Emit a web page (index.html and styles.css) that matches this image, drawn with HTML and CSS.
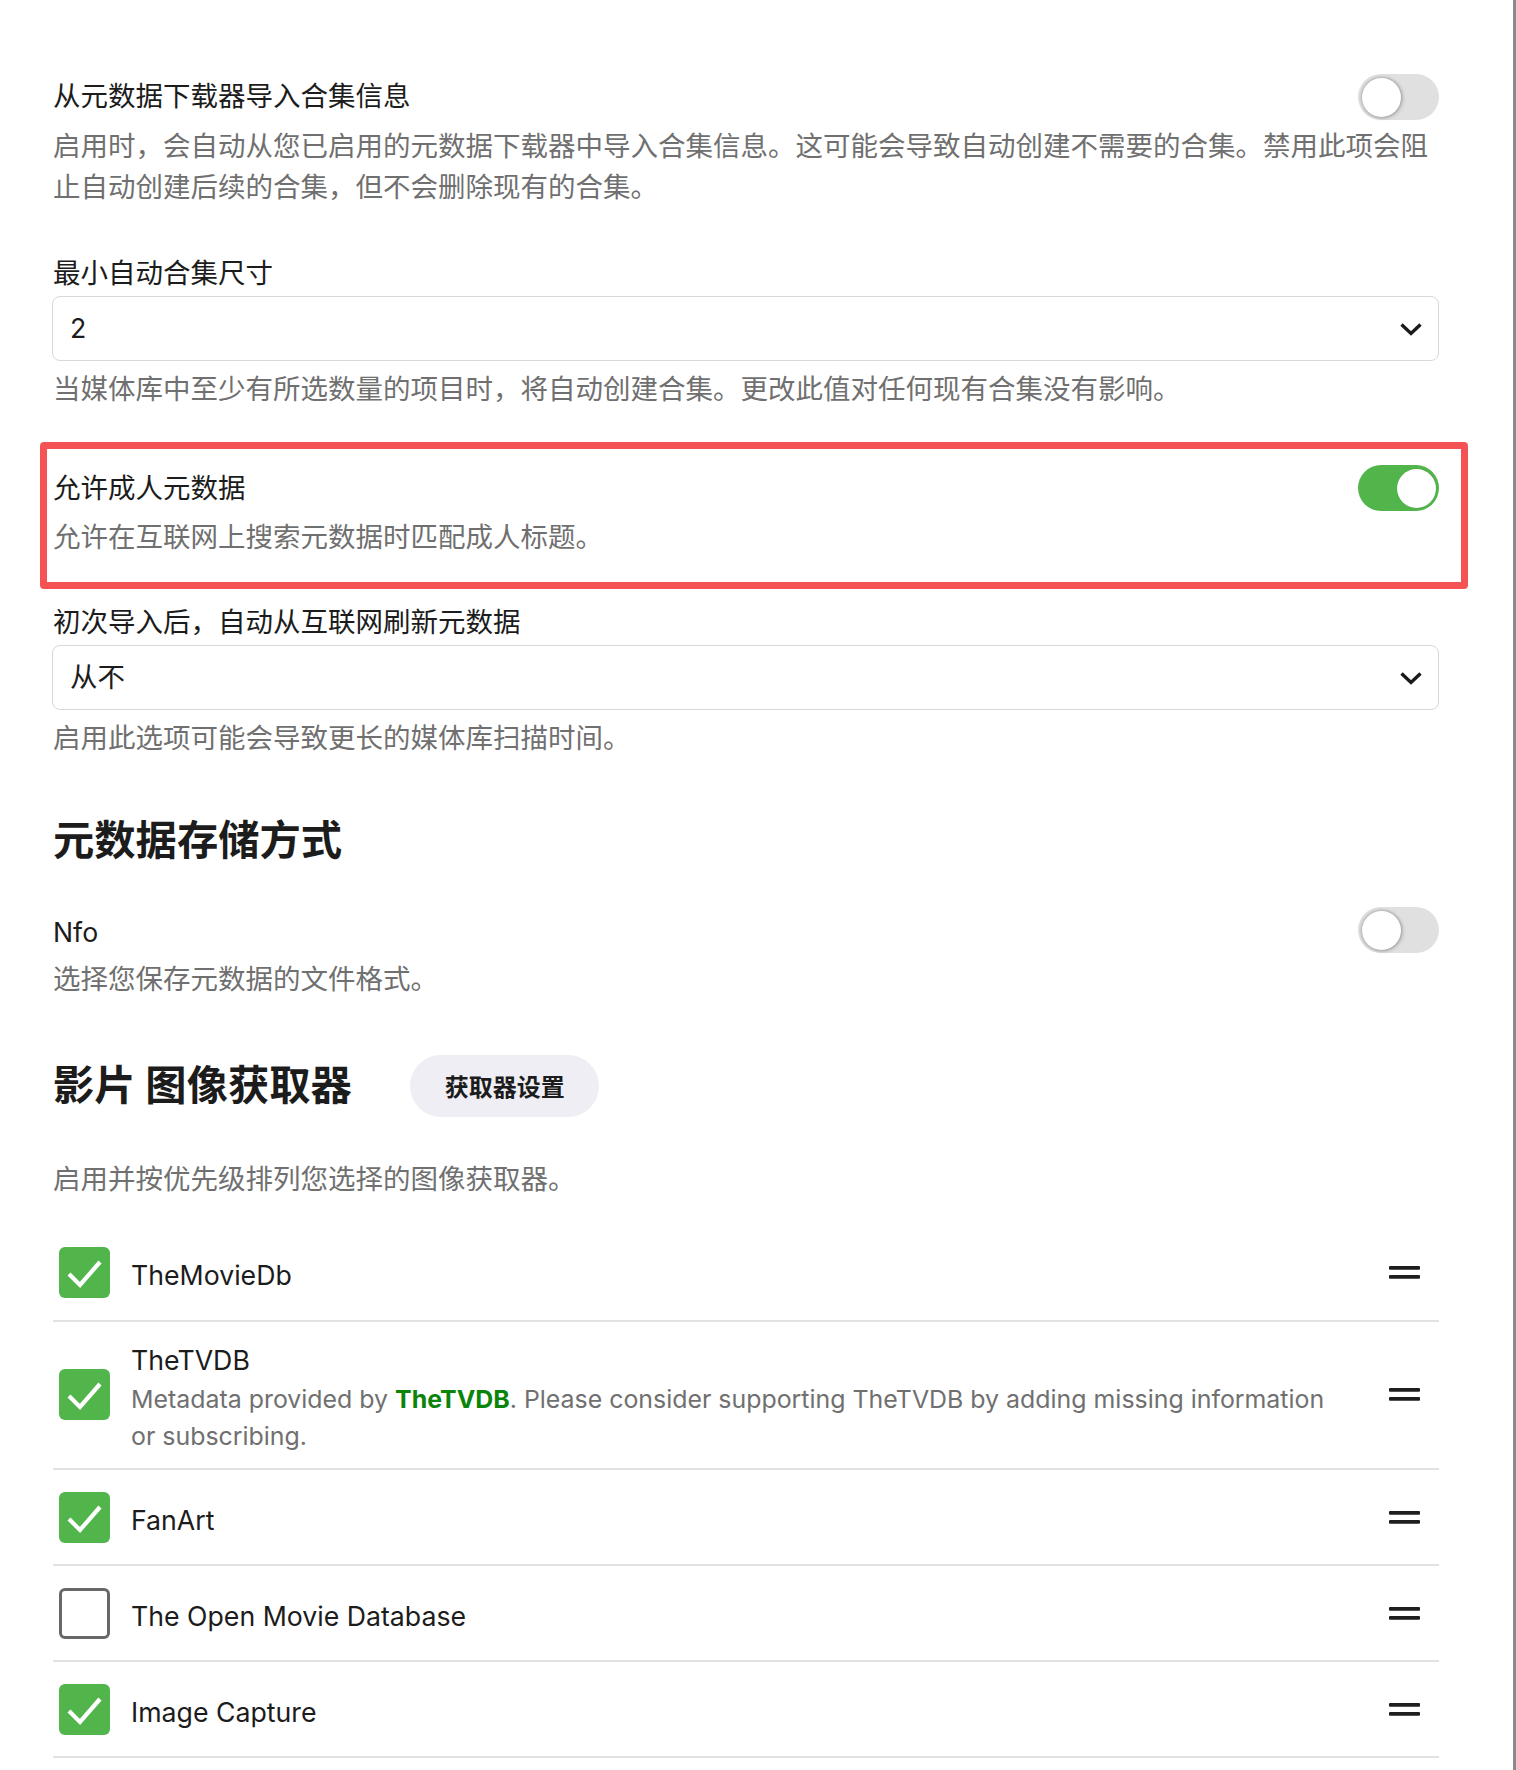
FILE: index.html
```html
<!DOCTYPE html>
<html lang="zh-CN">
<head>
<meta charset="utf-8">
<title>元数据设置</title>
<link rel="stylesheet" href="styles.css">
</head>
<body>
<div class="page">

  <div class="field field-first">
    <div class="switch-row">
      <span class="label">从元数据下载器导入合集信息</span>
      <span class="switch"><span class="knob"></span></span>
    </div>
    <div class="desc desc-toggle">启用时，会自动从您已启用的元数据下载器中导入合集信息。这可能会导致自动创建不需要的合集。禁用此项会阻止自动创建后续的合集，但不会删除现有的合集。</div>
  </div>

  <div class="field field-select">
    <div class="label">最小自动合集尺寸</div>
    <div class="select">
      <span class="select-value latin">2</span>
      <svg class="chevron" width="24" height="14" viewBox="0 0 24 14"><polyline points="2.5,2.5 12,11.5 21.5,2.5" fill="none" stroke="#1a1a1a" stroke-width="3.4"/></svg>
    </div>
    <div class="desc desc-select">当媒体库中至少有所选数量的项目时，将自动创建合集。更改此值对任何现有合集没有影响。</div>
  </div>

  <div class="field field-highlight">
    <div class="switch-row">
      <span class="label">允许成人元数据</span>
      <span class="switch on"><span class="knob"></span></span>
    </div>
    <div class="desc desc-toggle">允许在互联网上搜索元数据时匹配成人标题。</div>
  </div>

  <div class="field field-select field-after-highlight">
    <div class="label">初次导入后，自动从互联网刷新元数据</div>
    <div class="select">
      <span class="select-value">从不</span>
      <svg class="chevron" width="24" height="14" viewBox="0 0 24 14"><polyline points="2.5,2.5 12,11.5 21.5,2.5" fill="none" stroke="#1a1a1a" stroke-width="3.4"/></svg>
    </div>
    <div class="desc desc-select">启用此选项可能会导致更长的媒体库扫描时间。</div>
  </div>

  <h2 class="section-title">元数据存储方式</h2>

  <div class="field field-nfo">
    <div class="switch-row">
      <span class="label latin latin-label">Nfo</span>
      <span class="switch"><span class="knob"></span></span>
    </div>
    <div class="desc desc-toggle">选择您保存元数据的文件格式。</div>
  </div>

  <div class="section-head">
    <h2 class="section-title">影片 图像获取器</h2>
    <button class="pill-button" type="button">获取器设置</button>
  </div>

  <div class="desc desc-list">启用并按优先级排列您选择的图像获取器。</div>

  <div class="fetcher-list">
    <div class="fetcher">
      <span class="checkbox checked"><svg width="51" height="51" viewBox="0 0 51 51"><polyline points="10,27 21,38 41,15" fill="none" stroke="#fff" stroke-width="4.2"/></svg></span>
      <div class="fetcher-text"><div class="fetcher-name">TheMovieDb</div></div>
      <svg class="handle" width="31" height="13" viewBox="0 0 31 13"><rect x="0" y="0" width="31" height="3.8" rx="1"/><rect x="0" y="9" width="31" height="3.8" rx="1"/></svg>
    </div>
    <div class="fetcher fetcher-tall">
      <span class="checkbox checked"><svg width="51" height="51" viewBox="0 0 51 51"><polyline points="10,27 21,38 41,15" fill="none" stroke="#fff" stroke-width="4.2"/></svg></span>
      <div class="fetcher-text">
        <div class="fetcher-name">TheTVDB</div>
        <div class="fetcher-desc">Metadata provided by <a class="tvdb-link" href="#">TheTVDB</a>. Please consider supporting TheTVDB by adding missing information or subscribing.</div>
      </div>
      <svg class="handle" width="31" height="13" viewBox="0 0 31 13"><rect x="0" y="0" width="31" height="3.8" rx="1"/><rect x="0" y="9" width="31" height="3.8" rx="1"/></svg>
    </div>
    <div class="fetcher">
      <span class="checkbox checked"><svg width="51" height="51" viewBox="0 0 51 51"><polyline points="10,27 21,38 41,15" fill="none" stroke="#fff" stroke-width="4.2"/></svg></span>
      <div class="fetcher-text"><div class="fetcher-name">FanArt</div></div>
      <svg class="handle" width="31" height="13" viewBox="0 0 31 13"><rect x="0" y="0" width="31" height="3.8" rx="1"/><rect x="0" y="9" width="31" height="3.8" rx="1"/></svg>
    </div>
    <div class="fetcher">
      <span class="checkbox"></span>
      <div class="fetcher-text"><div class="fetcher-name">The Open Movie Database</div></div>
      <svg class="handle" width="31" height="13" viewBox="0 0 31 13"><rect x="0" y="0" width="31" height="3.8" rx="1"/><rect x="0" y="9" width="31" height="3.8" rx="1"/></svg>
    </div>
    <div class="fetcher">
      <span class="checkbox checked"><svg width="51" height="51" viewBox="0 0 51 51"><polyline points="10,27 21,38 41,15" fill="none" stroke="#fff" stroke-width="4.2"/></svg></span>
      <div class="fetcher-text"><div class="fetcher-name">Image Capture</div></div>
      <svg class="handle" width="31" height="13" viewBox="0 0 31 13"><rect x="0" y="0" width="31" height="3.8" rx="1"/><rect x="0" y="9" width="31" height="3.8" rx="1"/></svg>
    </div>
  </div>

</div>
</body>
</html>
```

FILE: styles.css
```css
html, body {
  margin: 0;
  padding: 0;
  background: #ffffff;
}

body {
  font-family: Inter, "Noto Sans CJK SC", sans-serif;
  font-size: 27.5px;
  line-height: 41.25px;
  color: #1c1c1c;
  min-height: 1770px;
  border-right: 3px solid #8a8a8a;
  box-sizing: border-box;
}

.page {
  width: 1386px;
  padding: 74px 0 0 53px;
}

.label {
  display: block;
}

.latin {
  font-size: 26.7px;
}

.latin-label {
  padding-top: 4px;
}

.desc {
  color: #707070;
}

.desc-toggle {
  margin-top: 5.5px;
}

.desc-select {
  margin-top: 7.4px;
}

.field-select {
  margin-top: 45px;
}

.field-after-highlight {
  margin-top: 44px;
}

.field-highlight {
  position: relative;
  margin-top: 55.5px;
}

.field-highlight::after {
  content: "";
  position: absolute;
  left: -13px;
  right: -29px;
  top: -23px;
  bottom: -31px;
  border: 7px solid #f55353;
  border-radius: 4px;
  pointer-events: none;
}

.field-nfo {
  margin-top: 41.2px;
}

/* switch */
.switch-row {
  display: flex;
  align-items: center;
  justify-content: space-between;
  height: 46px;
}

.switch {
  flex: none;
  display: flex;
  align-items: center;
  width: 81px;
  height: 46px;
  padding: 0 3.5px;
  box-sizing: border-box;
  border-radius: 23px;
  background: #e0e0e0;
}

.switch .knob {
  width: 39px;
  height: 39px;
  border-radius: 50%;
  background: #ffffff;
  box-shadow: 0 0 3px 1px rgba(0, 0, 0, 0.22), 2px 1px 4px rgba(0, 0, 0, 0.12);
}

.switch.on {
  background: #52b54b;
  justify-content: flex-end;
}

.switch.on .knob {
  box-shadow: 0 0 1px rgba(0, 0, 0, 0.25);
}

/* select */
.select {
  display: flex;
  align-items: center;
  justify-content: space-between;
  height: 65px;
  margin-top: 2px;
  margin-left: -1px;
  padding: 0 15px 0 17px;
  border: 1.5px solid #d8d8d8;
  border-radius: 8px;
  box-sizing: border-box;
  background: #ffffff;
}

.chevron {
  display: block;
}

/* headings */
.section-title {
  margin: 0;
  font-size: 41.3px;
  line-height: 51.6px;
  font-weight: 700;
  color: #1c1c1c;
}

.page > .section-title {
  margin-top: 55.6px;
}

.section-head {
  display: flex;
  align-items: center;
  margin-top: 54.4px;
}

.pill-button {
  margin-left: 58px;
  height: 62px;
  padding: 0 34px 0 35px;
  border: none;
  border-radius: 31px;
  background: #efeef4;
  color: #1c1c1c;
  font-family: inherit;
  font-size: 24px;
  font-weight: 700;
}

.desc-list {
  margin-top: 42.4px;
}

/* fetcher list */
.fetcher-list {
  margin-top: 25.4px;
}

.fetcher {
  display: flex;
  align-items: center;
  min-height: 96px;
  box-sizing: border-box;
  border-bottom: 2px solid #e2e2e2;
}

.fetcher-tall {
  padding: 12px 0 13.5px;
}

.checkbox {
  flex: none;
  display: block;
  width: 51px;
  height: 51px;
  margin: 0 21px 0 6px;
  box-sizing: border-box;
  border: 3.5px solid #686868;
  border-radius: 6px;
  background: #ffffff;
}

.checkbox.checked {
  border: none;
  background: #52b54b;
}

.checkbox svg {
  display: block;
}

.fetcher-text {
  flex: 1;
  padding-top: 6px;
  padding-right: 45px;
}

.fetcher-name {
  font-size: 26.7px;
  color: #1c1c1c;
}

.fetcher-desc {
  font-size: 24.9px;
  line-height: 37px;
  color: #707070;
}

.tvdb-link {
  color: #0a850a;
  font-weight: 700;
  text-decoration: none;
}

.handle {
  flex: none;
  display: block;
  margin-right: 19px;
  fill: #1e1e1e;
}
```
